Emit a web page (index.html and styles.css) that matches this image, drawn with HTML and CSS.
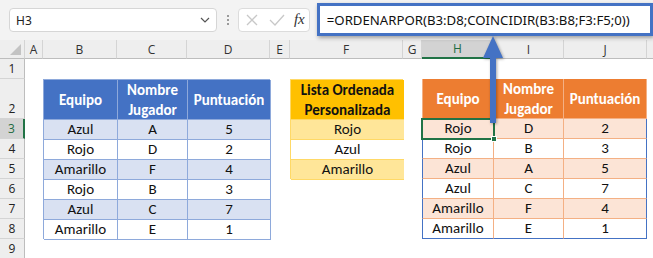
FILE: index.html
```html
<!DOCTYPE html>
<html lang="es">
<head>
<meta charset="utf-8">
<title>ORDENARPOR</title>
<link rel="stylesheet" href="styles.css">
</head>
<body>
<div class="app">
  <div class="bar">
    <div class="namebox">
      <span>H3</span>
      <svg class="chev" width="10" height="6" viewBox="0 0 10 6"><path d="M1 1 L5 5 L9 1" fill="none" stroke="#555" stroke-width="1.2"/></svg>
    </div>
    <div class="dots"><i></i><i></i><i></i></div>
    <div class="fxbox">
      <svg width="14" height="14" viewBox="0 0 14 14"><path d="M2 2 L12 12 M12 2 L2 12" stroke="#c8c8c8" stroke-width="1.3"/></svg>
      <svg width="16" height="14" viewBox="0 0 16 14"><path d="M1 7 L6 12 L15 2" fill="none" stroke="#c8c8c8" stroke-width="1.3"/></svg>
      <span class="fx">fx</span>
    </div>
    <div class="formula">=ORDENARPOR(B3:D8;COINCIDIR(B3:B8;F3:F5;0))</div>
  </div>

  <div class="sheet">
    <div class="corner"><span class="tri"></span></div>
    <div class="ch">A</div>
    <div class="ch">B</div>
    <div class="ch">C</div>
    <div class="ch">D</div>
    <div class="ch">E</div>
    <div class="ch">F</div>
    <div class="ch">G</div>
    <div class="ch sel">H</div>
    <div class="ch">I</div>
    <div class="ch">J</div>
    <div class="ch last"></div>

    <div class="rh r1">1</div>
    <div class="rh r2">2</div>
    <div class="rh r3 sel">3</div>
    <div class="rh r4">4</div>
    <div class="rh r5">5</div>
    <div class="rh r6">6</div>
    <div class="rh r7">7</div>
    <div class="rh r8">8</div>
    <div class="rh r9">9</div>

    <div class="tbl blue">
      <div class="hd">Equipo</div><div class="hd">Nombre Jugador</div><div class="hd">Puntuación</div>
      <div class="b">Azul</div><div class="b">A</div><div class="b">5</div>
      <div>Rojo</div><div>D</div><div>2</div>
      <div class="b">Amarillo</div><div class="b">F</div><div class="b">4</div>
      <div>Rojo</div><div>B</div><div>3</div>
      <div class="b">Azul</div><div class="b">C</div><div class="b">7</div>
      <div>Amarillo</div><div>E</div><div>1</div>
    </div>

    <div class="tbl gold">
      <div class="hd">Lista Ordenada Personalizada</div>
      <div class="b">Rojo</div>
      <div>Azul</div>
      <div class="b">Amarillo</div>
    </div>

    <div class="tbl orange">
      <div class="hd">Equipo</div><div class="hd">Nombre Jugador</div><div class="hd">Puntuación</div>
      <div class="b l active">Rojo<span class="handle"></span></div><div class="b">D</div><div class="b r">2</div>
      <div class="l">Rojo</div><div>B</div><div class="r">3</div>
      <div class="b l">Azul</div><div class="b">A</div><div class="b r">5</div>
      <div class="l">Azul</div><div>C</div><div class="r">7</div>
      <div class="b l">Amarillo</div><div class="b">F</div><div class="b r">4</div>
      <div class="l bt">Amarillo</div><div class="bt">E</div><div class="r bt">1</div>
    </div>
  </div>

  <svg class="arrow" width="30" height="96" viewBox="0 0 30 96">
    <path d="M15 1 L25 23 L18 23 L18 88 L12 88 L12 23 L5 23 Z" fill="#4472c4"/>
  </svg>
</div>
</body>
</html>
```

FILE: styles.css
```css
* { box-sizing: border-box; }

body {
  margin: 0;
  background: #ffffff;
  font-family: "Noto Sans", "DejaVu Sans", sans-serif;
  overflow: hidden;
}

.app {
  position: relative;
  width: 653px;
  height: 258px;
}

/* formula bar strip */
.bar {
  height: 40px;
  background: #f3f3f3;
  display: flex;
  align-items: center;
  padding-left: 9px;
}

.namebox {
  width: 210px;
  height: 24px;
  background: #fff;
  border: 1px solid #d6d6d6;
  border-radius: 4px;
  display: flex;
  align-items: center;
  justify-content: space-between;
  padding: 0 6px 0 6px;
  font-size: 12px;
  color: #222;
}

.dots {
  width: 22px;
  display: flex;
  flex-direction: column;
  align-items: center;
  gap: 2px;
}
.dots i {
  width: 2px;
  height: 2px;
  background: #9a9a9a;
  display: block;
}

.fxbox {
  width: 72px;
  height: 24px;
  background: #fff;
  border: 1px solid #dcdcdc;
  border-radius: 4px;
  display: flex;
  align-items: center;
  justify-content: space-between;
  padding: 0 4px 0 6px;
}
.fx {
  font-family: "Liberation Serif", "DejaVu Serif", serif;
  font-style: italic;
  font-size: 15px;
  color: #333;
  padding-bottom: 2px;
}

.formula {
  margin-left: 7px;
  width: 340px;
  height: 33px;
  margin-top: -1px;
  background: #fff;
  border: 3px solid #4472c4;
  box-shadow: 1px 2px 4px rgba(0,0,0,0.35);
  display: flex;
  align-items: center;
  padding-left: 7px;
  font-size: 13.2px;
  color: #111;
  white-space: nowrap;
  position: relative;
  z-index: 2;
}

/* worksheet grid */
.sheet {
  display: grid;
  grid-template-columns: 25px 18px 74px 70px 83px 20px 113px 19px 72px 70px 83px 1fr;
  grid-template-rows: 19px 20px 40px repeat(6, 20px) 20px;
}

.corner {
  background: #eeeeee;
  border-right: 1px solid #d4d4d4;
  border-bottom: 1px solid #bdbdbd;
  position: relative;
}
.tri {
  position: absolute;
  right: 3px;
  bottom: 3px;
  width: 0;
  height: 0;
  border-left: 11px solid transparent;
  border-bottom: 11px solid #c3c3c3;
}

.ch {
  background: #eeeeee;
  border-right: 1px solid #d4d4d4;
  border-bottom: 1px solid #bdbdbd;
  font-family: "Open Sans", "Noto Sans", sans-serif;
  font-size: 12px;
  color: #333;
  display: flex;
  align-items: center;
  justify-content: center;
}
.ch.sel {
  background: #d3d3d3;
  color: #1e6b41;
  border-bottom: 2px solid #217346;
}
.ch.last { border-right: 0; }

.rh {
  grid-column: 1;
  background: #eeeeee;
  border-right: 1px solid #bdbdbd;
  border-bottom: 1px solid #d4d4d4;
  font-family: "Open Sans", "Noto Sans", sans-serif;
  font-size: 12px;
  color: #222;
  display: flex;
  align-items: flex-end;
  justify-content: center;
  padding-bottom: 1px;
}
.rh.sel {
  background: #d3d3d3;
  color: #1e6b41;
  border-right: 2px solid #217346;
}
.r1 { grid-row: 2; }
.r2 { grid-row: 3; }
.r3 { grid-row: 4; }
.r4 { grid-row: 5; }
.r5 { grid-row: 6; }
.r6 { grid-row: 7; }
.r7 { grid-row: 8; }
.r8 { grid-row: 9; }
.r9 { grid-row: 10; }

/* data tables */
.tbl {
  display: grid;
  grid-template-rows: 40px repeat(auto-fill, 20px);
  font-family: "Carlito", "Lato", sans-serif;
  font-size: 15px;
  color: #111;
}
.tbl > div {
  display: flex;
  align-items: center;
  justify-content: center;
  text-align: center;
  line-height: 19px;
  background: #fff;
  position: relative;
}
.tbl .hd {
  font-weight: bold;
  line-height: 20px;
}

.blue {
  grid-column: 3 / 6;
  grid-row: 3 / 10;
  grid-template-columns: 74px 70px 83px;
  border: 1px solid #8ea9db;
  border-right: 0;
  border-bottom: 0;
}
.blue > div {
  border-right: 1px solid #8ea9db;
  border-bottom: 1px solid #8ea9db;
}
.blue .hd { background: #4472c4; color: #fff; }
.blue .b { background: #d9e1f2; }

.gold {
  grid-column: 7;
  grid-row: 3 / 7;
  grid-template-columns: 113px;
  border: 1px solid #ffd966;
  border-bottom: 0;
}
.gold > div { border-bottom: 1px solid #ffd966; }
.gold .hd { background: #ffc000; color: #111; }
.gold .b { background: #ffe699; }

.orange {
  grid-column: 9 / 12;
  grid-row: 3 / 10;
  grid-template-columns: 72px 70px 83px;
}
.orange > div {
  border-right: 1px solid #f4b084;
  border-bottom: 1px solid #f4b084;
}
.orange .hd { background: #ed7d31; color: #fff; border-color: #f4b084; }
.orange .hd:first-child { border-left: 1px solid #f4b084; }
.orange .b { background: #fce4d6; }
.orange .l { border-left: 1px solid #4472c4; }
.orange .r { border-right: 1px solid #4472c4; }
.orange .bt { border-bottom: 1px solid #4472c4; }

.orange .active {
  outline: 2px solid #217346;
  outline-offset: -1px;
  z-index: 1;
}
.handle {
  position: absolute;
  right: -4px;
  bottom: -4px;
  width: 6px;
  height: 6px;
  background: #217346;
  border: 1px solid #fff;
}

/* pointer from the result table to the formula */
.arrow {
  position: absolute;
  left: 478px;
  top: 35px;
  z-index: 3;
  filter: drop-shadow(1px 1px 1.5px rgba(0,0,0,0.35));
}
```
